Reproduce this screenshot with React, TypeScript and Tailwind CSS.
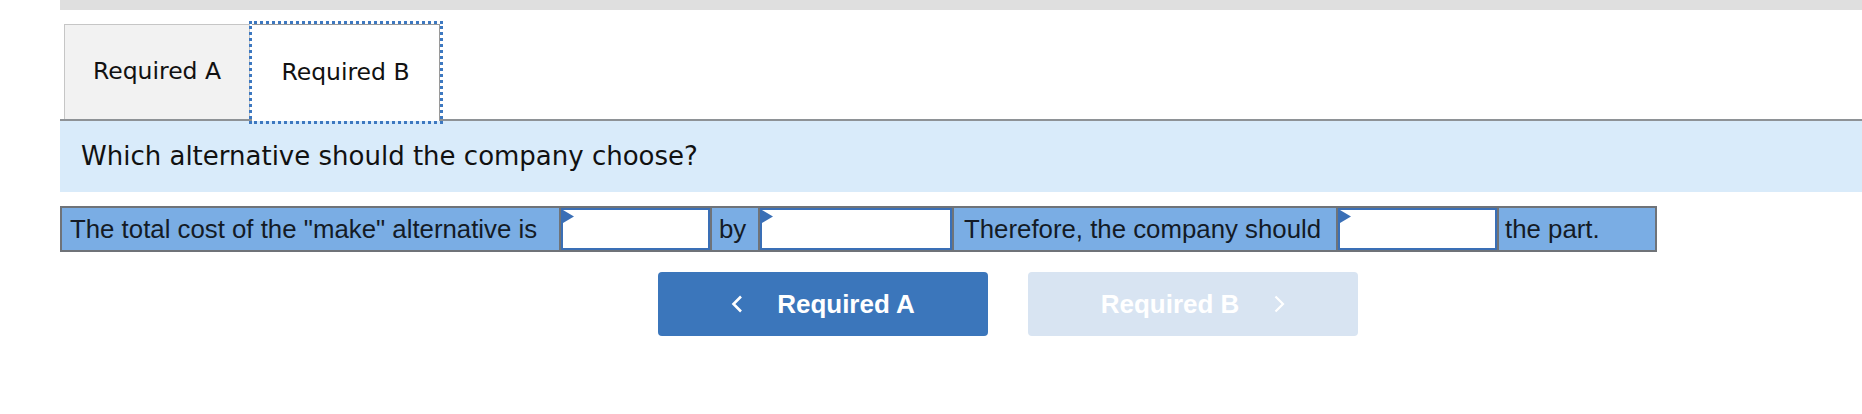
import React from "react";

function Triangle() {
  return (
    <svg
      className="absolute left-0 top-0"
      width="11"
      height="13"
      viewBox="0 0 11 13"
    >
      <polygon points="0,0 11,6.5 0,13" fill="#3a6fb6" />
    </svg>
  );
}

function InputCell({ w }: { w: string }) {
  return (
    <div className={`${w} h-full`}>
      <div className="relative h-full w-full border-2 border-[#3a6fb6] bg-white">
        <Triangle />
      </div>
    </div>
  );
}

function TextCell({ w, pl, children }: { w: string; pl: string; children: React.ReactNode }) {
  return (
    <div className={`${w} ${pl} flex h-full items-center whitespace-nowrap bg-[#7aade4] text-[#141b26]`}>
      {children}
    </div>
  );
}

export default function App() {
  return (
    <div className="h-[414px] w-full overflow-hidden bg-white">
      <div className="pl-[60px]">
        <div className="h-[10px] bg-[#dfdfdf]" />
        <div
          className="mt-[14px] flex items-end border-b-2 border-[#8e9296] text-[#111]"
          style={{ fontFamily: '"DejaVu Sans", Verdana, sans-serif' }}
        >
          <div className="ml-[4px] flex h-[95px] w-[186px] items-center justify-center border border-b-0 border-[#c6c6c6] bg-[#f2f2f2] text-[23.5px]">
            Required A
          </div>
          <div className="relative z-10 -mb-[2px] ml-[2px] flex h-[97px] w-[188px] items-center justify-center border-t border-r border-[#9a9a9a] bg-white text-[23.5px] outline-[3px] outline-dotted outline-[#3d78c0] outline-offset-[0px]">
            Required B
          </div>
        </div>
        <div
          className="flex h-[71px] items-center bg-[#d9ebfa] pl-[21px] text-[26px] text-[#111]"
          style={{ fontFamily: '"DejaVu Sans", Verdana, sans-serif' }}
        >
          Which alternative should the company choose?
        </div>
        <div
          className="mt-[14px] flex h-[46px] w-[1597px] divide-x-2 divide-[#6f7378] border-2 border-[#6f7378] text-[25.8px]"
          style={{ fontFamily: '"Liberation Sans", Arial, sans-serif' }}
        >
          <TextCell w="w-[499px]" pl="pl-[8px]">
            The total cost of the "make" alternative is
          </TextCell>
          <InputCell w="w-[151px]" />
          <TextCell w="w-[48px]" pl="pl-[7px]">
            by
          </TextCell>
          <InputCell w="w-[194px]" />
          <TextCell w="w-[384px]" pl="pl-[10px]">
            Therefore, the company should
          </TextCell>
          <InputCell w="w-[161px]" />
          <TextCell w="w-[156px]" pl="pl-[6px]">
            the part.
          </TextCell>
        </div>
        <div
          className="ml-[598px] mt-[20px] flex gap-[40px] text-[26px] font-bold text-white"
          style={{ fontFamily: '"Liberation Sans", Arial, sans-serif' }}
        >
          <button className="flex h-[64px] w-[330px] items-center justify-center gap-[34px] rounded-[4px] bg-[#3b76bb]">
            <svg width="12" height="18" viewBox="0 0 12 18">
              <polyline points="10,1.5 2.5,9 10,16.5" fill="none" stroke="white" strokeWidth="2.6" />
            </svg>
            <span>Required A</span>
          </button>
          <button className="flex h-[64px] w-[330px] items-center justify-center gap-[35px] rounded-[4px] bg-[#d8e4f2]">
            <span>Required B</span>
            <svg width="11" height="18" viewBox="0 0 11 18">
              <polyline points="1.5,1.5 9,9 1.5,16.5" fill="none" stroke="white" strokeWidth="2.2" />
            </svg>
          </button>
        </div>
      </div>
    </div>
  );
}
